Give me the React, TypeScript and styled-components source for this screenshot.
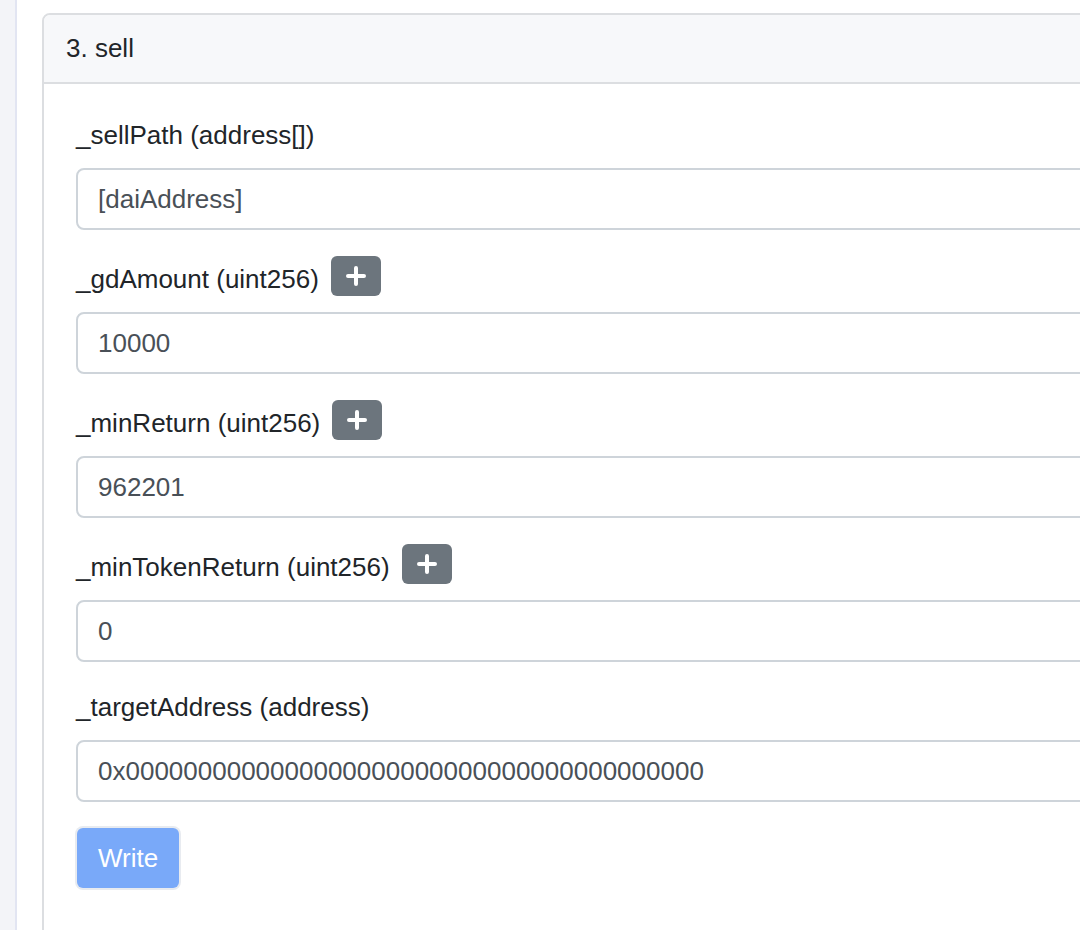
import React from "react";
import styled, { createGlobalStyle } from "styled-components";

const Global = createGlobalStyle`
  html, body { margin: 0; padding: 0; background: #ffffff; }
  body { font-family: "Liberation Sans", Arial, sans-serif; overflow: hidden; }
  * { box-sizing: border-box; }
`;

const Page = styled.div`
  display: flex;
  width: 1080px;
  height: 930px;
  overflow: hidden;
`;

const Sidebar = styled.div`
  flex: 0 0 17px;
  background: #f3f4f8;
  border-right: 2px solid #e2e5f2;
`;

const Main = styled.div`
  flex: 1;
  padding: 13px 0 0 25px;
  min-width: 0;
`;

const Card = styled.div`
  width: 1100px;
  border: 2px solid #dcdee1;
  border-radius: 8px 8px 0 0;
  background: #fff;
  color: #212529;
`;

const CardHeader = styled.div`
  height: 69px;
  display: flex;
  align-items: center;
  padding: 0 22px;
  background: #f7f8fa;
  border-bottom: 2px solid #dcdee1;
  border-radius: 6px 6px 0 0;
  font-size: 26px;
  color: #212529;
`;

const CardBody = styled.div`
  padding: 32px 32px 60px 32px;
`;

const Group = styled.div`
  margin-bottom: 26px;
`;

const LabelRow = styled.div<{ $withButton?: boolean }>`
  display: flex;
  align-items: flex-start;
  height: ${(p) => (p.$withButton ? "43px" : "39px")};
  margin-bottom: 13px;
`;

const Label = styled.label<{ $withButton?: boolean }>`
  font-size: 26px;
  line-height: 39px;
  color: #212529;
  padding-top: ${(p) => (p.$withButton ? "4px" : "0")};
`;

const AddButton = styled.button`
  margin-left: 12px;
  width: 50px;
  height: 40px;
  border: none;
  border-radius: 6px;
  background: #6c757d;
  display: flex;
  align-items: center;
  justify-content: center;
  padding: 0;
  cursor: pointer;
`;

const Input = styled.div`
  height: 62px;
  width: 1060px;
  border: 2px solid #ced4da;
  border-radius: 8px;
  padding: 0 20px;
  display: flex;
  align-items: center;
  font-size: 26px;
  color: #495057;
  background: #fff;
`;

const WriteButton = styled.button`
  margin-left: 1px;
  height: 60px;
  padding: 0 21px;
  border: none;
  border-radius: 6px;
  background: #79a9f9;
  color: #ffffff;
  font-family: "Liberation Sans", Arial, sans-serif;
  font-size: 26px;
  line-height: 39px;
  box-shadow: 0 0 0 2px #e8ebf0;
  cursor: default;
`;

const Plus = () => (
  <svg width="20" height="20" viewBox="0 0 20 20" aria-hidden="true">
    <path d="M10 2v16M2 10h16" stroke="#ffffff" strokeWidth="4" strokeLinecap="round" />
  </svg>
);

type Field = { name: string; type: string; value: string; add?: boolean };

const fields: Field[] = [
  { name: "_sellPath", type: "address[]", value: "[daiAddress]" },
  { name: "_gdAmount", type: "uint256", value: "10000", add: true },
  { name: "_minReturn", type: "uint256", value: "962201", add: true },
  { name: "_minTokenReturn", type: "uint256", value: "0", add: true },
  {
    name: "_targetAddress",
    type: "address",
    value: "0x0000000000000000000000000000000000000000",
  },
];

export default function App() {
  return (
    <>
      <Global />
      <Page>
        <Sidebar />
        <Main>
          <Card>
            <CardHeader>3. sell</CardHeader>
            <CardBody>
              {fields.map((f) => (
                <Group key={f.name}>
                  <LabelRow $withButton={f.add}>
                    <Label $withButton={f.add}>
                      {f.name} ({f.type})
                    </Label>
                    {f.add && (
                      <AddButton type="button">
                        <Plus />
                      </AddButton>
                    )}
                  </LabelRow>
                  <Input>{f.value}</Input>
                </Group>
              ))}
              <WriteButton type="button">Write</WriteButton>
            </CardBody>
          </Card>
        </Main>
      </Page>
    </>
  );
}
